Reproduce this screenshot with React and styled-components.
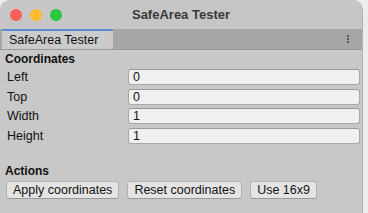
import React from 'react';
import styled, { createGlobalStyle } from 'styled-components';

const GlobalStyle = createGlobalStyle`
  html, body {
    margin: 0;
    padding: 0;
    background: #ececec;
  }
  body {
    font-family: "Liberation Sans", Arial, sans-serif;
  }
`;

const Window = styled.div`
  width: 362px;
  height: 213px;
  background: #c8c8c8;
  border-top-left-radius: 10px;
  border-top-right-radius: 10px;
  overflow: hidden;
  display: flex;
  flex-direction: column;
  border-right: 1px solid #b0b0b0;
`;

const TitleBar = styled.div`
  height: 29px;
  flex: none;
  display: flex;
  align-items: center;
  position: relative;
  background: #c6c6c6;
`;

const Lights = styled.div`
  display: flex;
  gap: 8px;
  padding-left: 10px;
`;

const Light = styled.span`
  width: 12px;
  height: 12px;
  border-radius: 50%;
  background: ${p => p.color};
`;

const Title = styled.div`
  position: absolute;
  left: 0;
  right: 0;
  text-align: center;
  font-weight: bold;
  font-size: 13px;
  color: #3a3a3a;
  pointer-events: none;
`;

const TabBar = styled.div`
  height: 20px;
  flex: none;
  display: flex;
  align-items: stretch;
  background: #a6a6a6;
  border-bottom: 1px solid #999;
`;

const Tab = styled.div`
  width: 111px;
  margin-left: 2px;
  background: #cbcbcb;
  border-top: 2px solid #5b8ad6;
  font-size: 12.5px;
  color: #111;
  padding-left: 7px;
  display: flex;
  align-items: center;
  box-sizing: border-box;
`;

const Kebab = styled.div`
  margin-left: auto;
  width: 28px;
  display: flex;
  flex-direction: column;
  align-items: center;
  justify-content: center;
  gap: 1px;
  span {
    width: 2px;
    height: 2px;
    background: #555;
  }
`;

const Content = styled.div`
  padding: 2px 2px 0 5px;
  display: flex;
  flex-direction: column;
`;

const Heading = styled.div`
  font-weight: bold;
  font-size: 12px;
  color: #111;
  margin-top: ${p => p.$top || 0}px;
  height: 15px;
`;

const Row = styled.div`
  display: grid;
  grid-template-columns: 123px 1fr;
  align-items: center;
  height: 19.7px;
`;

const Label = styled.span`
  font-size: 12.5px;
  color: #111;
  padding-left: 2px;
`;

const Field = styled.div`
  height: 16px;
  background: #f0f0f0;
  border: 1px solid #a9a9a9;
  border-top-color: #999;
  border-radius: 3px;
  box-sizing: border-box;
  font-size: 12.5px;
  line-height: 14px;
  padding-left: 4px;
  color: #111;
`;

const Actions = styled.div`
  display: flex;
  gap: 8px;
  padding-left: 1px;
  margin-top: 2px;
`;

const Button = styled.button`
  height: 18px;
  padding: 0 6px;
  background: #e4e4e4;
  border: 1px solid #b2b2b2;
  border-bottom-color: #999;
  border-radius: 3px;
  font-family: inherit;
  font-size: 12.5px;
  color: #111;
  line-height: 16px;
`;

const fields = [
  ['Left', '0'],
  ['Top', '0'],
  ['Width', '1'],
  ['Height', '1'],
];

export default function App() {
  return (
    <>
      <GlobalStyle />
      <Window>
        <TitleBar>
          <Lights>
            <Light color="#fe5f57" />
            <Light color="#febc2e" />
            <Light color="#28c840" />
          </Lights>
          <Title>SafeArea Tester</Title>
        </TitleBar>
        <TabBar>
          <Tab>SafeArea Tester</Tab>
          <Kebab><span /><span /><span /></Kebab>
        </TabBar>
        <Content>
          <Heading>Coordinates</Heading>
          {fields.map(([name, value]) => (
            <Row key={name}>
              <Label>{name}</Label>
              <Field>{value}</Field>
            </Row>
          ))}
          <Heading $top={18}>Actions</Heading>
          <Actions>
            <Button>Apply coordinates</Button>
            <Button>Reset coordinates</Button>
            <Button>Use 16x9</Button>
          </Actions>
        </Content>
      </Window>
    </>
  );
}
